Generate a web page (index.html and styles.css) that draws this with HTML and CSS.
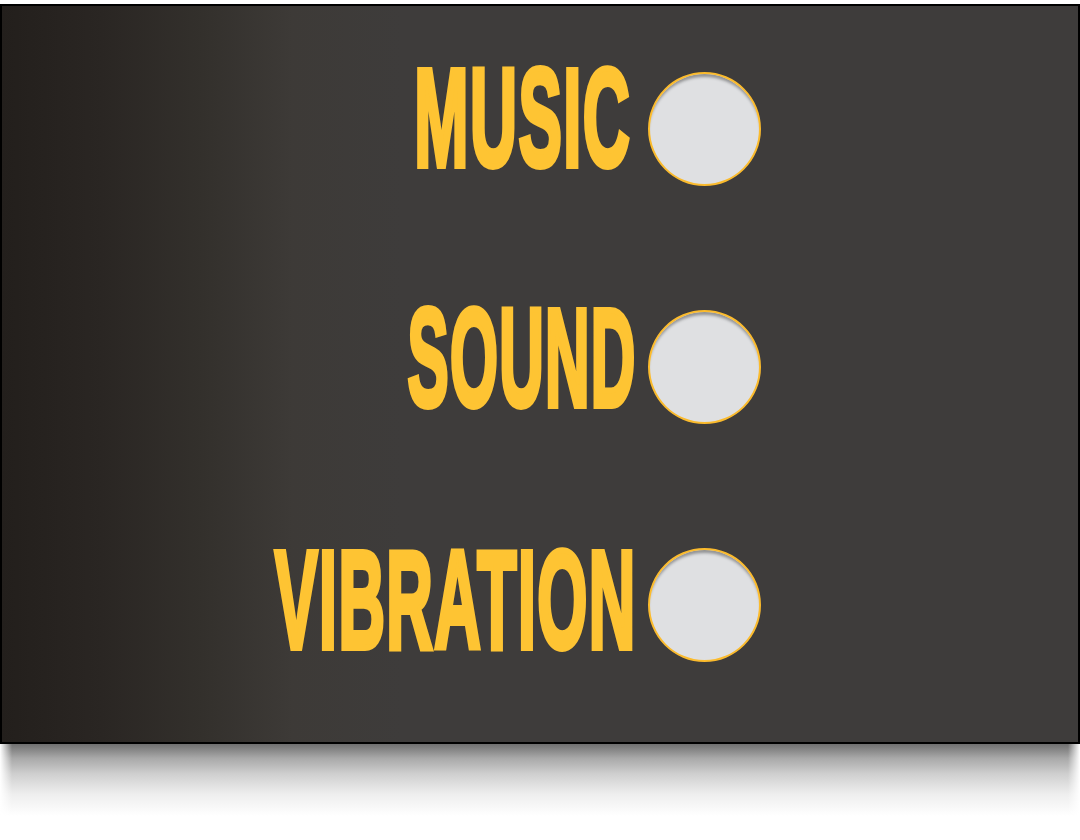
FILE: index.html
```html
<!DOCTYPE html>
<html lang="en">
<head>
    <meta charset="UTF-8">
    <title>Settings</title>
    <link rel="stylesheet" href="styles.css">
</head>
<body>
    <div class="panel">
        <div class="row">
            <span class="label label-music">MUSIC</span>
            <span class="toggle"></span>
        </div>
        <div class="row">
            <span class="label label-sound">SOUND</span>
            <span class="toggle"></span>
        </div>
        <div class="row">
            <span class="label label-vibration">VIBRATION</span>
            <span class="toggle"></span>
        </div>
    </div>
    <div class="panel-shadow"></div>
</body>
</html>
```

FILE: styles.css
```css
body {
    margin: 0;
    padding: 4px 0 0;
    background: #fff;
}
.panel {
    box-sizing: border-box;
    height: 740px;
    padding: 66px 317px 0 0;
    border: 2px solid #000;
    background: linear-gradient(to right, #231f1c 0, #2a2623 100px, #33302c 200px, #3d3a37 290px, #3e3c3b 400px);
    display: flex;
    flex-direction: column;
    align-items: flex-end;
    gap: 124px;
}
.panel-shadow {
    height: 72px;
    background:
        linear-gradient(to right, #fff 0, rgba(255, 255, 255, 0) 12px, rgba(255, 255, 255, 0) 1068px, #fff 1080px),
        linear-gradient(to bottom, #6f6f6f 0, #a8a8a8 14px, #cfcfcf 30px, #eeeeee 50px, #fff 72px);
}
.row {
    display: flex;
    align-items: center;
    justify-content: flex-end;
    height: 114px;
    width: 700px;
}
.label {
    font-family: "Liberation Sans", Arial, sans-serif;
    font-weight: 700;
    font-size: 140px;
    line-height: 114px;
    letter-spacing: 3px;
    color: #fec433;
    -webkit-text-stroke: 6px #fec433;
    transform-origin: right center;
    white-space: nowrap;
}
.label-music {
    margin: 0 17px 22px 0;
    transform: scaleX(0.465);
}
.label-sound {
    margin: 0 11px 18px 0;
    transform: scaleX(0.44);
}
.label-vibration {
    margin: 0 11px 10px 0;
    transform: scaleX(0.46);
}
.toggle {
    flex: none;
    box-sizing: border-box;
    width: 113px;
    height: 114px;
    border: 2px solid #fbbb2d;
    border-radius: 50%;
    background: #dfe0e2;
    box-shadow: inset 0 5px 3px -2px rgba(0, 0, 0, 0.35);
}
```
